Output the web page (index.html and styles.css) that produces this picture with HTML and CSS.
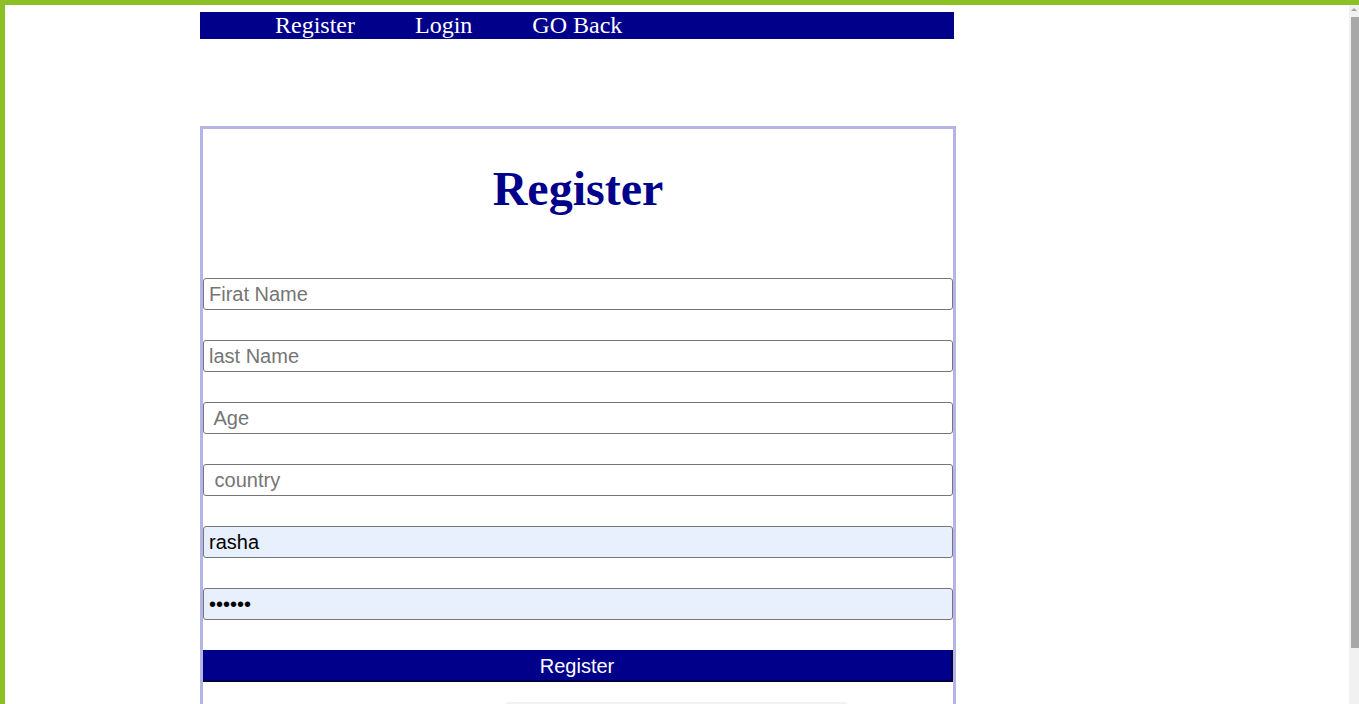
FILE: index.html
```html
<!DOCTYPE html>
<html lang="en">
<head>
<meta charset="utf-8">
<title>Register</title>
<link rel="stylesheet" href="styles.css">
</head>
<body>
<div class="page">
  <nav class="nav">
    <a href="#" class="nav-link">Register</a>
    <a href="#" class="nav-link">Login</a>
    <a href="#" class="nav-link">GO Back</a>
  </nav>
  <div class="card">
    <h1 class="title">Register</h1>
    <form class="form">
      <input class="field" type="text" placeholder="Firat Name">
      <input class="field" type="text" placeholder="last Name">
      <input class="field" type="text" placeholder=" Age">
      <input class="field" type="text" placeholder=" country">
      <input class="field filled" type="text" value="rasha">
      <input class="field filled" type="password" value="123456">
      <button class="submit" type="button">Register</button>
    </form>
    <div class="extra"></div>
  </div>
</div>
<div class="scrollbar"><div class="arrow"></div><div class="thumb"></div></div>
</body>
</html>
```

FILE: styles.css
```css
html {
  overflow: hidden;
}
body {
  margin: 0;
  border-top: 5px solid #8fbf26;
  border-left: 5px solid #8fbf26;
  background: #ffffff;
  font-family: "Liberation Serif", "Times New Roman", serif;
  min-height: 900px;
}
.page {
  margin-left: 195px;
  width: 756px;
  padding-top: 7px;
}
.nav {
  width: 754px;
  height: 27px;
  background: #00008b;
  display: flex;
  gap: 60px;
  padding-left: 75px;
  box-sizing: border-box;
}
.nav-link {
  color: #ffffff;
  text-decoration: none;
  font-size: 24px;
  line-height: 27px;
}
.card {
  margin-top: 87px;
  border: 3px solid #b4b4e6;
  padding-bottom: 60px;
}
.title {
  margin: 32px 0 62px;
  text-align: center;
  color: #00008b;
  font-size: 48px;
  font-weight: bold;
  line-height: 55px;
}
.form {
  display: flex;
  flex-direction: column;
  gap: 30px;
}
.field {
  height: 32px;
  box-sizing: border-box;
  border: 1px solid #767676;
  border-radius: 3px;
  padding: 0 5px;
  font-family: "Liberation Sans", Arial, sans-serif;
  font-size: 20px;
  color: #000000;
  background: #ffffff;
  margin: 0;
}
.field::placeholder {
  color: #757575;
}
.filled {
  background: #e8f0fe;
}
.submit {
  height: 32px;
  width: 750px;
  box-sizing: border-box;
  margin: 0;
  border: none;
  border-right: 2px solid #000040;
  border-bottom: 2px solid #000040;
  background: #00008b;
  color: #ffffff;
  font-family: "Liberation Sans", Arial, sans-serif;
  font-size: 20px;
  padding: 2px 0 0;
  line-height: 28px;
}
.extra {
  margin: 20px 0 0 302px;
  width: 343px;
  height: 40px;
  border-top: 2px solid #f2f2f2;
  border-radius: 4px;
}
.scrollbar {
  position: fixed;
  top: 5px;
  right: 0;
  width: 10px;
  height: 699px;
  background: #f1f1f1;
}
.arrow {
  position: absolute;
  top: 3px;
  left: 2px;
  width: 0;
  height: 0;
  border-left: 3px solid transparent;
  border-right: 3px solid transparent;
  border-bottom: 3px solid #a3a3a3;
}
.thumb {
  position: absolute;
  top: 12px;
  left: 2px;
  width: 8px;
  height: 631px;
  background: #a8a8a8;
}
```
